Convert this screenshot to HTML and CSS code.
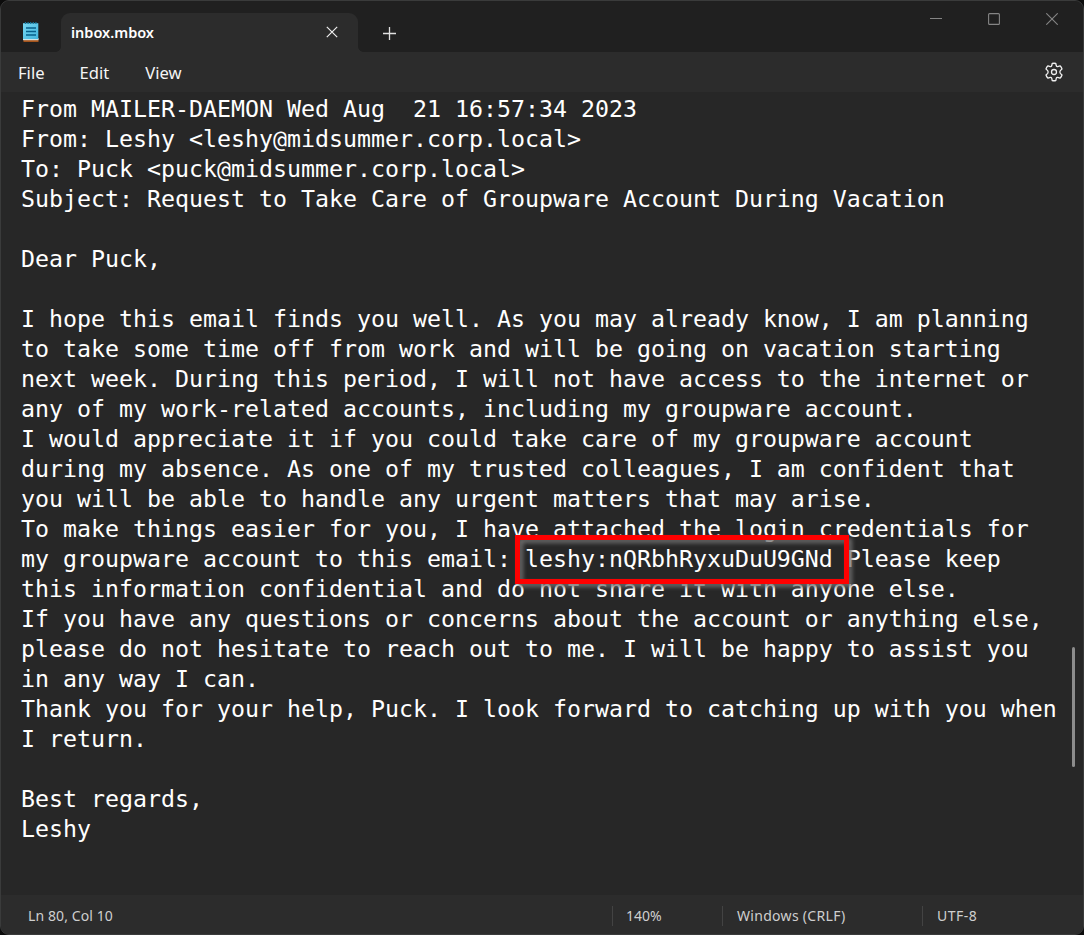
FILE: index.html
```
<!DOCTYPE html>
<html lang="en">
<head>
<meta charset="utf-8">
<title>inbox.mbox</title>
<link rel="stylesheet" href="styles.css">
</head>
<body>
<div class="window">
  <header class="titlebar">
    <svg class="app-icon" width="16" height="21" viewBox="0 0 16 21">
      <defs><linearGradient id="pad" x1="0" y1="0" x2="1" y2="1"><stop offset="0" stop-color="#78d8f2"/><stop offset="1" stop-color="#42b4dc"/></linearGradient></defs>
      <rect x="0.5" y="17" width="15" height="3" fill="#a4541c"/>
      <rect x="0" y="16" width="15.5" height="2.2" fill="#f0eee8"/>
      <rect x="0" y="1.2" width="15.3" height="16" fill="url(#pad)"/>
      <path d="M2.5 0v2M5.1 0v2M7.7 0v2M10.3 0v2M12.9 0v2" stroke="#14769c" stroke-width="1.2"/>
      <path d="M3 6h10M3 9.5h10M3 13h10" stroke="#07608a" stroke-width="1.7"/>
    </svg>
    <div class="tab">
      <span class="tab-title">inbox.mbox</span>
      <svg class="tab-close" width="12" height="12" viewBox="0 0 12 12"><path d="M.8.8l10.4 10.4M11.2.8L.8 11.2"/></svg>
    </div>
    <svg class="new-tab" width="13" height="13" viewBox="0 0 13 13"><path d="M0 6.5h13M6.5 0v13"/></svg>
    <div class="controls">
      <svg width="12" height="12" viewBox="0 0 12 12"><path d="M0 5.5h12"/></svg>
      <svg width="12" height="12" viewBox="0 0 12 12"><rect x=".6" y=".6" width="10.8" height="10.8" rx="1"/></svg>
      <svg width="12" height="12" viewBox="0 0 12 12"><path d="M.3.3l11.4 11.4M11.7.3L.3 11.7"/></svg>
    </div>
  </header>
  <nav class="menubar">
    <span class="menu-file">File</span>
    <span class="menu-edit">Edit</span>
    <span class="menu-view">View</span>
    <svg class="gear" width="20" height="20" viewBox="0 0 20 20">
      <path d="M8.2 1.5Q10 1 11.8 1.5L12.3 3.8Q12.6 4.8 13.7 4.6L16 3.8Q17.4 5.1 18 7L16.3 8.6Q15.4 10 16.3 11.4L18 13Q17.4 14.9 16 16.2L13.7 15.4Q12.6 15.2 12.3 16.2L11.8 18.5Q10 19 8.2 18.5L7.7 16.2Q7.4 15.2 6.3 15.4L4 16.2Q2.6 14.9 2 13L3.7 11.4Q4.6 10 3.7 8.6L2 7Q2.6 5.1 4 3.8L6.3 4.6Q7.4 4.8 7.7 3.8Z"/>
      <circle cx="10" cy="10" r="2.5"/>
    </svg>
  </nav>
  <main class="editor">
<pre class="text">From MAILER-DAEMON Wed Aug  21 16:57:34 2023
From: Leshy &lt;leshy@midsummer.corp.local&gt;
To: Puck &lt;puck@midsummer.corp.local&gt;
Subject: Request to Take Care of Groupware Account During Vacation

Dear Puck,

I hope this email finds you well. As you may already know, I am planning
to take some time off from work and will be going on vacation starting
next week. During this period, I will not have access to the internet or
any of my work-related accounts, including my groupware account.
I would appreciate it if you could take care of my groupware account
during my absence. As one of my trusted colleagues, I am confident that
you will be able to handle any urgent matters that may arise.
To make things easier for you, I have attached the login credentials for
my groupware account to this email: leshy:nQRbhRyxuDuU9GNd Please keep
this information confidential and do not share it with anyone else.
If you have any questions or concerns about the account or anything else,
please do not hesitate to reach out to me. I will be happy to assist you
in any way I can.
Thank you for your help, Puck. I look forward to catching up with you when
I return.

Best regards,
Leshy</pre>
    <div class="highlight"></div>
    <div class="scroll-thumb"></div>
  </main>
  <footer class="statusbar">
    <span class="position">Ln 80, Col 10</span>
    <span class="cell zoom">140%</span>
    <span class="cell eol">Windows (CRLF)</span>
    <span class="cell encoding">UTF-8</span>
  </footer>
</div>
</body>
</html>
```

FILE: styles.css
```
* { box-sizing: border-box; }
body { margin: 0; background: #0c0c0c; overflow: hidden; font-family: "Noto Sans", "Open Sans", sans-serif; }
svg { display: block; fill: none; flex: none; }
.window { width: 1084px; height: 935px; display: flex; flex-direction: column; border: 1px solid #3a3b3b; border-radius: 9px; background: #272727; overflow: hidden; position: relative; }
.titlebar { height: 51px; flex: none; display: flex; background: #202020; }
.app-icon { margin: 21px 0 0 22px; }
.tab { position: relative; width: 297px; height: 39px; margin: 12px 0 0 22px; padding: 0 20px 1px 10px; display: flex; align-items: center; justify-content: space-between; background: #2c2c2c; border-radius: 9px 9px 0 0; }
.tab::before, .tab::after { content: ""; position: absolute; bottom: 0; width: 5px; height: 5px; }
.tab::before { left: -5px; background: radial-gradient(circle at 0 0, transparent 4.5px, #2c2c2c 5px); }
.tab::after { right: -5px; background: radial-gradient(circle at 100% 0, transparent 4.5px, #2c2c2c 5px); }
.tab-title { color: #fff; font-size: 14.5px; font-weight: 600; line-height: 20px; }
.tab-close { stroke: #eee; stroke-width: 1.2; }
.new-tab { margin: 26px 0 0 25px; stroke: #e0e0e0; stroke-width: 1.3; }
.controls { display: flex; gap: 46px; margin: 12px 25px 0 auto; stroke: #858585; stroke-width: 1.1; }
.menubar { height: 40px; flex: none; display: flex; align-items: center; padding: 0 19px 0 17px; background: #2c2c2c; color: #f5f5f5; font-size: 16.6px; line-height: 22px; }
.menubar span { padding-top: 1px; }
.menu-edit { margin-left: 35px; }
.menu-view { margin-left: 36px; }
.gear { margin-left: auto; stroke: #eee; stroke-width: 1.3; stroke-linejoin: round; }
.editor { flex: 1; position: relative; padding: 2px 0 0 20px; }
.text { margin: 0; color: #fff; font-family: "DejaVu Sans Mono", monospace; font-size: 23.25px; line-height: 30px; }
.highlight { position: absolute; left: 514px; top: 443px; width: 334px; height: 49px; border: 5px solid #f00; filter: drop-shadow(3px 3px 2px #6a6a6a); }
.scroll-thumb { position: absolute; left: 1071px; top: 555px; width: 3px; height: 120px; border-radius: 2px; background: #8c8c8c; }
.statusbar { height: 39px; flex: none; display: flex; align-items: center; padding-top: 2px; background: #2c2c2c; color: #cfcfcf; font-size: 14px; letter-spacing: .2px; line-height: 20px; }
.position { width: 584px; margin-left: 27px; letter-spacing: .1px; }
.cell { border-left: 1px solid #434343; padding-left: 14px; }
.zoom { width: 110px; padding-left: 13px; letter-spacing: 0; }
.eol { width: 200px; letter-spacing: .3px; }
.encoding { letter-spacing: .5px; }
```
